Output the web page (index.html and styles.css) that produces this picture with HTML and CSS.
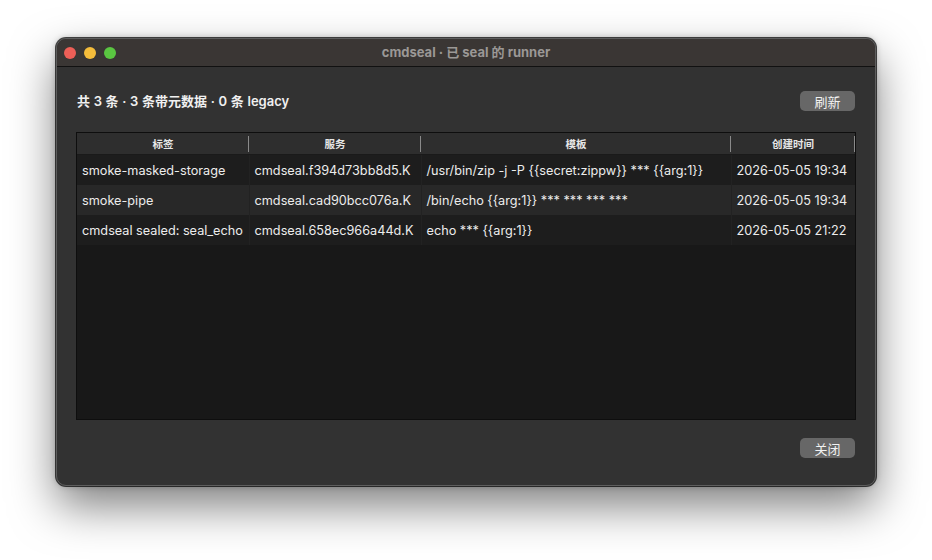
FILE: index.html
```html
<!DOCTYPE html>
<html lang="zh-CN">
<head>
  <meta charset="UTF-8">
  <title>cmdseal · 已 seal 的 runner</title>
  <link rel="stylesheet" href="styles.css">
</head>
<body>
  <div class="window">
    <div class="titlebar">
      <div class="lights">
        <span class="light red"></span>
        <span class="light yellow"></span>
        <span class="light green"></span>
      </div>
      <div class="title">cmdseal · 已 seal 的 runner</div>
    </div>
    <div class="content">
      <div class="top-row">
        <span class="summary">共 3 条 · 3 条带元数据 · 0 条 legacy</span>
        <button class="btn">刷新</button>
      </div>
      <div class="table-box">
        <table>
          <colgroup>
            <col class="c-label"><col class="c-service"><col class="c-tpl"><col class="c-time">
          </colgroup>
          <tr><th>标签</th><th>服务</th><th>模板</th><th>创建时间</th></tr>
          <tr><td>smoke-masked-storage</td><td>cmdseal.f394d73bb8d5.K</td><td>/usr/bin/zip -j -P {{secret:zippw}} *** {{arg:1}}</td><td>2026-05-05 19:34</td></tr>
          <tr><td>smoke-pipe</td><td>cmdseal.cad90bcc076a.K</td><td>/bin/echo {{arg:1}} *** *** *** ***</td><td>2026-05-05 19:34</td></tr>
          <tr><td>cmdseal sealed: seal_echo</td><td>cmdseal.658ec966a44d.K</td><td>echo *** {{arg:1}}</td><td>2026-05-05 21:22</td></tr>
        </table>
      </div>
      <div class="bottom-row">
        <button class="btn">关闭</button>
      </div>
    </div>
  </div>
</body>
</html>
```

FILE: styles.css
```css
html, body { height: 560px; }
body { margin: 0; background: #ffffff; font-family: Inter, "Noto Sans CJK SC", sans-serif; -webkit-font-smoothing: antialiased; overflow: hidden; }
.window { width: 818px; height: 446px; margin: 0 0 0 56px; position: relative; top: 38px; background: #323232; border: 1px solid #5e5e5e; border-radius: 10px; box-shadow: 0 0 0 1px rgba(0, 0, 0, 0.7), 0 0 6px rgba(0, 0, 0, 0.25), 0 20px 45px rgba(0, 0, 0, 0.5); overflow: hidden; display: flex; flex-direction: column; }
.titlebar { height: 27px; background: #3a3634; border-bottom: 1px solid #111; display: flex; align-items: center; position: relative; }
.lights { display: flex; gap: 8px; padding-left: 7px; }
.light { width: 12px; height: 12px; border-radius: 50%; }
.red { background: #ed5f57; }
.yellow { background: #f5bd3b; }
.green { background: #5ac641; }
.title { position: absolute; left: 0; right: 0; text-align: center; color: #9b9896; font-size: 13px; font-weight: 700; top: 3px; }
.content { flex: 1; padding: 24px 20px 0 19px; display: flex; flex-direction: column; }
.top-row { display: flex; justify-content: space-between; align-items: center; height: 20px; }
.summary { color: #f0f0f0; font-size: 13px; font-weight: 600; padding-left: 1px; margin-top: -1px; word-spacing: 0.4px; }
.btn { width: 55px; height: 20px; border: none; border-radius: 5px; background: #676767; color: #f2f2f2; font-family: Inter, "Noto Sans CJK SC", sans-serif; font-size: 13px; padding: 0; }
.table-box { margin-top: 21px; height: 288px; background: #181818; border: 1px solid #0e0e0e; box-sizing: border-box; width: 780px; }
table { width: 778px; border-collapse: collapse; table-layout: fixed; }
.c-label { width: 172px; }
.c-service { width: 172px; }
.c-tpl { width: 310px; }
.c-time { width: 124px; }
th { height: 21px; background: #2e2e2e; color: #e6e6e6; font-size: 10.5px; font-weight: 700; text-align: center; padding: 0; position: relative; border-bottom: 1px solid #1a1a1a; }
th::after { content: ""; position: absolute; right: 0; top: 3px; bottom: 2px; width: 1px; background: #8a8a8a; }
td { height: 30px; padding: 0 0 0 5px; color: #ececec; font-size: 12.7px; white-space: nowrap; overflow: hidden; border-right: 1px solid #222; }
tr:nth-child(2) td, tr:nth-child(4) td { background: #1d1d1d; }
tr:nth-child(3) td { background: #282828; }
td:last-child { border-right: none; }
.bottom-row { display: flex; justify-content: flex-end; margin-top: 18px; }
```
